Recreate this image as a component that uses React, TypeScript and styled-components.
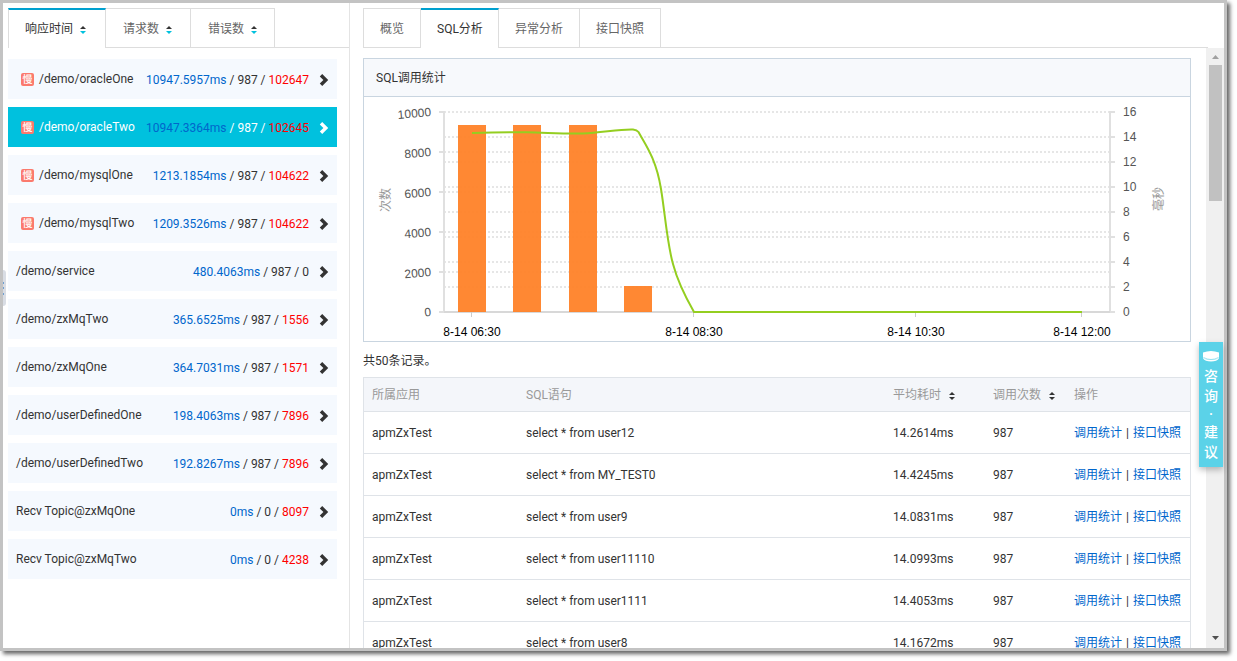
import React from "react";
import styled, { createGlobalStyle, css } from "styled-components";

const GlobalStyle = createGlobalStyle`
  *, *::before, *::after { box-sizing: border-box; }
  body {
    margin: 0;
    background: #fff;
    color: #333;
    font: 12px/20px Roboto, "Noto Sans CJK SC", sans-serif;
  }
  button {
    font: inherit;
    color: inherit;
    background: none;
    border: 0;
    padding: 0;
    cursor: pointer;
  }
  a { color: #06c; text-decoration: none; }
`;

const Page = styled.div`
  display: flex;
  height: 100vh;
  padding: 0 10px 10px 0;
  overflow: hidden;
`;

const Frame = styled.div`
  position: relative;
  display: flex;
  flex: 1;
  min-width: 0;
  border: 3px solid #c3c3c3;
  background: #fff;
  box-shadow: 3px 3px 4px rgba(0, 0, 0, 0.6);
`;

const Sidebar = styled.aside`
  flex: 0 0 347px;
  padding: 5px 0 0 5px;
  border-right: 1px solid #e4e4e4;
  overflow: hidden;
`;

const Main = styled.main`
  flex: 1;
  min-width: 0;
  display: flex;
  flex-direction: column;
  padding: 5px 0 0 13px;
`;

const TabBar = styled.div<{ $inset?: number }>`
  display: flex;
  flex: none;
  height: 40px;
  margin-right: ${(p) => p.$inset ?? 0}px;
  box-shadow: inset 0 -1px #ddd;
`;

const Tab = styled.button<{ $active?: boolean }>`
  display: flex;
  align-items: center;
  gap: 7px;
  height: 40px;
  padding: 2px 16px 0;
  border: 1px solid #ddd;
  color: #666;
  white-space: nowrap;
  & + & { border-left: 0; }
  ${(p) =>
    p.$active &&
    css`
      border-top: 2px solid #00a0cf;
      border-bottom: 0;
      background: #fff;
      color: #333;
      padding: 1px 15px 1px 16px;
    `}
`;

const SortTab = styled(Tab)`
  padding-left: 17px;
  padding-right: 18px;
  &:first-child { padding-left: 16px; padding-right: 19px; }
  &:last-child { padding-right: 17px; }
  svg { position: relative; top: 1px; }
`;

const List = styled.ul`
  display: flex;
  flex-direction: column;
  gap: 8px;
  margin: 11px 12px 0 0;
  padding: 0;
  list-style: none;
`;

const Entry = styled.button<{ $active?: boolean }>`
  display: flex;
  align-items: center;
  width: 100%;
  height: 40px;
  padding: 0 8px;
  text-align: left;
  white-space: nowrap;
  background: ${(p) => (p.$active ? "#00c1de" : "#f5f9fe")};
  color: ${(p) => (p.$active ? "#fff" : "#333")};
`;

const SlowBadge = styled.span`
  width: 13px;
  height: 13px;
  margin: 0 5px;
  border-radius: 2px;
  background: #fb7a6d;
  color: #fff;
  font-size: 10px;
  font-weight: 500;
  line-height: 13px;
  text-align: center;
`;

const EntryName = styled.span`
  flex: 1;
`;

const EntryStats = styled.span`
  padding-top: 1px;
`;

const Time = styled.span`
  color: #06c;
`;

const Errors = styled.span<{ $none: boolean }>`
  color: ${(p) => (p.$none ? "inherit" : "#f00")};
`;

const Chevron = styled.svg`
  flex: none;
  width: 10px;
  height: 14px;
  margin-left: 10px;
  fill: currentColor;
`;

const Handle = styled.button`
  position: absolute;
  left: 0;
  top: 267px;
  width: 3px;
  height: 36px;
  border-radius: 0 3px 3px 0;
  background: #d9dde4;
  svg { display: block; }
`;

const Body = styled.div`
  flex: 1;
  min-height: 0;
  display: flex;
  gap: 15px;
`;

const Content = styled.div`
  flex: 1;
  min-width: 0;
  padding-top: 10px;
  overflow: hidden;
`;

const Scrollbar = styled.div`
  flex: 0 0 18px;
  display: flex;
  flex-direction: column;
  align-items: center;
  background: #f0f0f0;
`;

const ScrollArrow = styled.svg`
  flex: none;
  width: 17px;
  height: 17px;
`;

const Thumb = styled.div`
  width: 13px;
  height: 136px;
  margin-bottom: auto;
  background: #c1c1c1;
`;

const Panel = styled.section`
  border: 1px solid #c9d5e0;
`;

const PanelTitle = styled.h2`
  margin: 0;
  padding: 2px 12px 0;
  border-bottom: 1px solid #c9d5e0;
  background: #f7f9fc;
  font-size: 12px;
  font-weight: normal;
  line-height: 35px;
`;

const ChartSvg = styled.svg`
  display: block;
  width: 100%;
  height: auto;
  font: 12px "Liberation Sans", "Noto Sans CJK SC", sans-serif;
`;

const Count = styled.p`
  margin: 0;
  padding-top: 3px;
  line-height: 32px;
`;

const Table = styled.table`
  width: 100%;
  table-layout: fixed;
  border: 1px solid #dfe3e8;
  border-spacing: 0;
  white-space: nowrap;
`;

const Th = styled.th<{ $width?: number }>`
  width: ${(p) => (p.$width ? `${p.$width}px` : "auto")};
  height: 34px;
  padding: 0 0 0 8px;
  border-bottom: 1px solid #dfe3e8;
  background: #f4f6fa;
  color: #999;
  font-weight: normal;
  text-align: left;
`;

const Td = styled.td`
  height: 42px;
  padding: 0 0 0 8px;
  border-bottom: 1px solid #dfe3e8;
`;

const Divider = styled.span`
  margin: 0 4px;
`;

const SortButton = styled.button`
  display: flex;
  align-items: center;
  gap: 8px;
  svg { position: relative; top: 1px; }
`;

const Feedback = styled.a`
  position: absolute;
  top: 339px;
  right: 1px;
  display: flex;
  flex-direction: column;
  align-items: center;
  width: 24px;
  height: 125px;
  padding-top: 8px;
  background: #5bd2e8;
  box-shadow: 0 3px 6px rgba(0, 0, 0, 0.25);
  color: #fff;
  font-size: 14px;
  font-weight: 500;
  line-height: 20px;
  svg { margin-bottom: 4px; }
`;

const FeedbackDot = styled.span`
  line-height: 16px;
`;

const SortIcon = ({ down = "#333" }: { down?: string }) => (
  <svg width="6" height="8" viewBox="0 0 6 8" aria-hidden="true">
    <path d="M3 0L6 3H0Z" fill="#333" />
    <path d="M0 5H6L3 8Z" fill={down} />
  </svg>
);

const endpoints = [
  { name: "/demo/oracleOne", time: "10947.5957ms", calls: 987, errors: 102647, slow: true },
  { name: "/demo/oracleTwo", time: "10947.3364ms", calls: 987, errors: 102645, slow: true, active: true },
  { name: "/demo/mysqlOne", time: "1213.1854ms", calls: 987, errors: 104622, slow: true },
  { name: "/demo/mysqlTwo", time: "1209.3526ms", calls: 987, errors: 104622, slow: true },
  { name: "/demo/service", time: "480.4063ms", calls: 987, errors: 0 },
  { name: "/demo/zxMqTwo", time: "365.6525ms", calls: 987, errors: 1556 },
  { name: "/demo/zxMqOne", time: "364.7031ms", calls: 987, errors: 1571 },
  { name: "/demo/userDefinedOne", time: "198.4063ms", calls: 987, errors: 7896 },
  { name: "/demo/userDefinedTwo", time: "192.8267ms", calls: 987, errors: 7896 },
  { name: "Recv Topic@zxMqOne", time: "0ms", calls: 0, errors: 8097 },
  { name: "Recv Topic@zxMqTwo", time: "0ms", calls: 0, errors: 4238 },
];

const statements = [
  { sql: "select * from user12", time: "14.2614ms" },
  { sql: "select * from MY_TEST0", time: "14.4245ms" },
  { sql: "select * from user9", time: "14.0831ms" },
  { sql: "select * from user11110", time: "14.0993ms" },
  { sql: "select * from user1111", time: "14.4053ms" },
  { sql: "select * from user8", time: "14.1672ms" },
];

const LEFT = 80;
const RIGHT = 746;
const BASE = 215;
const countTicks = [0, 2000, 4000, 6000, 8000, 10000];
const msTicks = [0, 2, 4, 6, 8, 10, 12, 14, 16];
const bars = [
  { x: 94, top: 28 },
  { x: 149, top: 28 },
  { x: 205, top: 28 },
  { x: 260, top: 189 },
];
const times = [
  { x: 108, label: "8-14 06:30" },
  { x: 330, label: "8-14 08:30" },
  { x: 552, label: "8-14 10:30" },
  { x: 718, label: "8-14 12:00" },
];

const countY = (v: number) => BASE - v / 50;
const msY = (v: number) => BASE - v * 12.5;

const Chart = () => {
  const gridRows = Array.from(new Set([...countTicks.map(countY), ...msTicks.map(msY)])).filter(
    (y) => y !== BASE
  );
  return (
    <ChartSvg viewBox="0 0 826 244" role="img" aria-label="SQL调用统计">
      <g stroke="#e6e6e6" strokeWidth="2" strokeDasharray="2 2">
        {gridRows.map((y) => (
          <line key={y} x1={LEFT} x2={RIGHT} y1={y} y2={y} />
        ))}
      </g>
      <g stroke="#e0e0e0" strokeWidth="2">
        <line x1={LEFT} x2={LEFT} y1="14" y2={BASE} />
        <line x1={RIGHT} x2={RIGHT} y1="14" y2={BASE} />
        {countTicks.map((v) => (
          <line key={v} x1={LEFT - 5} x2={LEFT} y1={countY(v)} y2={countY(v)} />
        ))}
        {msTicks.map((v) => (
          <line key={v} x1={RIGHT} x2={RIGHT + 5} y1={msY(v)} y2={msY(v)} />
        ))}
        <line x1={LEFT} x2={RIGHT} y1={BASE} y2={BASE} stroke="#d8d8d8" />
      </g>
      <g stroke="#ccc">
        {times.map((t) => (
          <line key={t.x} x1={t.x - 0.5} x2={t.x - 0.5} y1={BASE} y2={BASE + 5} />
        ))}
      </g>
      {bars.map((b) => (
        <rect key={b.x} x={b.x} y={b.top} width="28" height={BASE - b.top} fill="#ff7f24" fillOpacity="0.93" />
      ))}
      <path
        d="M108 36C126 35.400 145 35 163 35.300C182 35.600 200 37 219 36.500C237 36 255 32 269 32.500C272 32.800 273 33 274.500 35C281 47 292 61 297 92C301 116 303 146 309 167C314 186 322 201 330 215H718"
        fill="none"
        stroke="#94ce20"
        strokeWidth="2"
      />
      <g fill="#555">
        {countTicks.map((v) => (
          <text key={v} x="67" y={countY(v) + 4} textAnchor="end" transform={`rotate(-5 67 ${countY(v)})`}>
            {v}
          </text>
        ))}
        {msTicks.map((v) => (
          <text key={v} x="759" y={msY(v) + 4}>
            {v}
          </text>
        ))}
      </g>
      <g fill="#000" textAnchor="middle">
        {times.map((t) => (
          <text key={t.x} x={t.x} y="239">
            {t.label}
          </text>
        ))}
      </g>
      <g fill="#999" textAnchor="middle">
        <text transform="translate(26 103) rotate(-90)">次数</text>
        <text transform="translate(799 102) rotate(-90)">毫秒</text>
      </g>
    </ChartSvg>
  );
};

export default function App() {
  return (
    <Page>
      <GlobalStyle />
      <Frame>
        <Sidebar>
          <TabBar>
            <SortTab $active>
              响应时间
              <SortIcon down="#00c1de" />
            </SortTab>
            <SortTab>
              请求数
              <SortIcon down="#00c1de" />
            </SortTab>
            <SortTab>
              错误数
              <SortIcon down="#00c1de" />
            </SortTab>
          </TabBar>
          <List>
            {endpoints.map((e) => (
              <li key={e.name}>
                <Entry $active={e.active}>
                  {e.slow && <SlowBadge>慢</SlowBadge>}
                  <EntryName>{e.name}</EntryName>
                  <EntryStats>
                    <Time>{e.time}</Time> / {e.calls} / <Errors $none={e.errors === 0}>{e.errors}</Errors>
                  </EntryStats>
                  <Chevron viewBox="0 0 10 14" aria-hidden="true">
                    <path d="M3.200 2L9.200 8L3.200 14L0.800 11.600L4.400 8L0.800 4.400Z" />
                  </Chevron>
                </Entry>
              </li>
            ))}
          </List>
        </Sidebar>
        <Main>
          <TabBar $inset={16}>
            <Tab>概览</Tab>
            <Tab $active>SQL分析</Tab>
            <Tab>异常分析</Tab>
            <Tab>接口快照</Tab>
          </TabBar>
          <Body>
            <Content>
              <Panel>
                <PanelTitle>SQL调用统计</PanelTitle>
                <Chart />
              </Panel>
              <Count>共50条记录。</Count>
              <Table>
                <thead>
                  <tr>
                    <Th $width={154}>所属应用</Th>
                    <Th>SQL语句</Th>
                    <Th $width={100}>
                      <SortButton>
                        平均耗时
                        <SortIcon />
                      </SortButton>
                    </Th>
                    <Th $width={81}>
                      <SortButton>
                        调用次数
                        <SortIcon />
                      </SortButton>
                    </Th>
                    <Th $width={124}>操作</Th>
                  </tr>
                </thead>
                <tbody>
                  {statements.map((s) => (
                    <tr key={s.sql}>
                      <Td>apmZxTest</Td>
                      <Td>{s.sql}</Td>
                      <Td>{s.time}</Td>
                      <Td>987</Td>
                      <Td>
                        <a href="#stats">调用统计</a>
                        <Divider>|</Divider>
                        <a href="#snapshot">接口快照</a>
                      </Td>
                    </tr>
                  ))}
                </tbody>
              </Table>
            </Content>
            <Scrollbar aria-hidden="true">
              <ScrollArrow viewBox="0 0 17 17">
                <path d="M5 11L8.500 7L12 11Z" fill="#a0a0a0" />
              </ScrollArrow>
              <Thumb />
              <ScrollArrow viewBox="0 0 17 17">
                <path d="M5 5L12 5L8.500 9Z" fill="#505050" />
              </ScrollArrow>
            </Scrollbar>
          </Body>
        </Main>
        <Handle aria-label="收起">
          <svg width="3" height="36" viewBox="0 0 3 36" aria-hidden="true">
            <path d="M0 12h1v2H0zM0 17h1v2H0zM0 23h1v2H0z" fill="#6f9fd0" />
          </svg>
        </Handle>
        <Feedback href="#feedback">
          <svg width="18" height="12" viewBox="0 0 18 12" aria-hidden="true">
            <path d="M1 2.500Q9-0.500 17 2.500V8.500Q9 11 1 8.500Z" fill="#fff" />
            <path d="M1 8.500Q9 11 17 8.500Q15 11.500 9 11.500Q3 11.500 1 8.500Z" fill="#fff" />
            <path d="M1.500 7.500Q9 11.500 16.500 7.500" fill="none" stroke="#5bd2e8" strokeWidth="0.600" />
          </svg>
          <span>咨</span>
          <span>询</span>
          <FeedbackDot>·</FeedbackDot>
          <span>建</span>
          <span>议</span>
        </Feedback>
      </Frame>
    </Page>
  );
}
